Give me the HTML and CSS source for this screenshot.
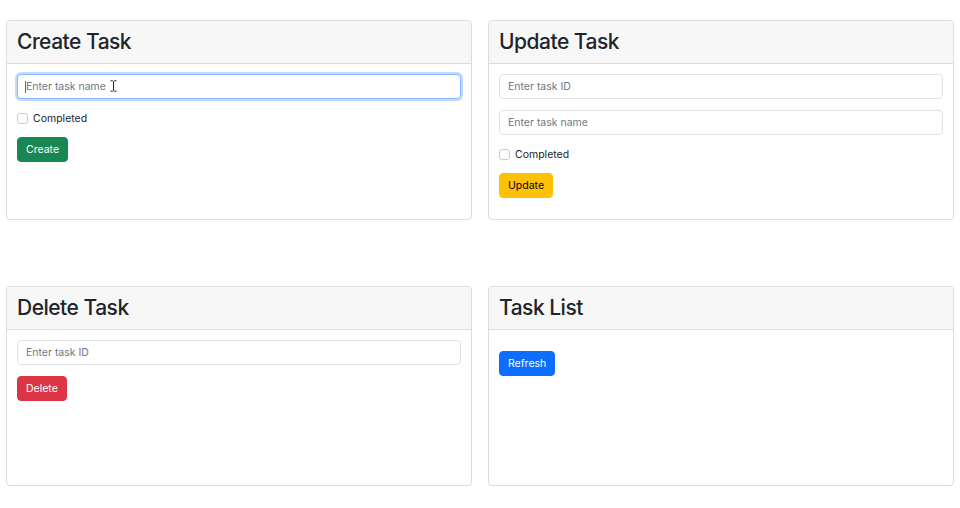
FILE: index.html
```html
<!DOCTYPE html>
<html lang="en">
<head>
<meta charset="utf-8">
<title>Tasks</title>
<link rel="stylesheet" href="styles.css">
</head>
<body>
<main class="grid">
  <section class="card">
    <header class="card-header"><h2>Create Task</h2></header>
    <div class="card-body">
      <div class="field">
        <input class="input focused" type="text" placeholder="Enter task name">
        <span class="caret"></span>
        <svg class="ibeam" width="7" height="12" viewBox="0 0 7 12"><path d="M0.5 0.8h2l1 0.8 1-0.8h2M3.5 1.6v8.8M0.5 11.2h2l1-0.8 1 0.8h2" fill="none" stroke="#222" stroke-width="1"/></svg>
      </div>
      <label class="check"><span class="box"></span>Completed</label>
      <button class="btn btn-green">Create</button>
    </div>
  </section>
  <section class="card">
    <header class="card-header"><h2>Update Task</h2></header>
    <div class="card-body">
      <div class="field"><input class="input" type="text" placeholder="Enter task ID"></div>
      <div class="field"><input class="input" type="text" placeholder="Enter task name"></div>
      <label class="check"><span class="box"></span>Completed</label>
      <button class="btn btn-yellow">Update</button>
    </div>
  </section>
  <section class="card">
    <header class="card-header"><h2>Delete Task</h2></header>
    <div class="card-body">
      <div class="field"><input class="input" type="text" placeholder="Enter task ID"></div>
      <button class="btn btn-red">Delete</button>
    </div>
  </section>
  <section class="card">
    <header class="card-header"><h2>Task List</h2></header>
    <div class="card-body">
      <ul class="list"></ul>
      <button class="btn btn-blue">Refresh</button>
    </div>
  </section>
</main>
</body>
</html>
```
FILE: styles.css
```css
* { box-sizing: border-box; }
html, body { margin: 0; padding: 0; background: #fff; }
body {
  font-family: Inter, "Helvetica Neue", "Liberation Sans", Arial, sans-serif;
  font-size: 10.5px;
  color: #212529;
}
.grid {
  display: grid;
  grid-template-columns: 466px 466px;
  column-gap: 16px;
  row-gap: 66px;
  padding: 20px 0 0 6px;
}
.card {
  height: 200px;
  border: 1px solid #dcdcdc;
  border-radius: 4px;
  background: #fff;
  overflow: hidden;
  display: flex;
  flex-direction: column;
}
.card-header {
  height: 43px;
  background: #f7f7f7;
  border-bottom: 1px solid #dcdcdc;
  padding: 0 10px;
  display: flex;
  align-items: center;
}
.card-header h2 {
  margin: 0;
  font-size: 21px;
  font-weight: 500;
  letter-spacing: -0.5px;
  color: #212529;
  line-height: 1;
  padding-bottom: 1px;
}
.card-body {
  padding: 10px 10px;
  display: flex;
  flex-direction: column;
  align-items: flex-start;
}
.field {
  width: 100%;
  margin-bottom: 11px;
  position: relative;
}
.input {
  display: block;
  width: 100%;
  height: 25px;
  padding: 0 8px;
  font-family: inherit;
  font-size: 10.5px;
  color: #212529;
  background: #fff;
  border: 1px solid #dee2e6;
  border-radius: 4px;
  outline: none;
}
.input::placeholder { color: #717780; }
.input.focused {
  border-color: #86b7fe;
  box-shadow: 0 0 0 2px rgba(13, 110, 253, 0.25);
}
.caret {
  position: absolute;
  left: 8px;
  top: 7px;
  width: 1px;
  height: 12px;
  background: #2f6df6;
}
.ibeam {
  position: absolute;
  left: 93px;
  top: 6px;
}
.check {
  display: flex;
  align-items: center;
  gap: 5px;
  height: 16px;
  margin-bottom: 11px;
  font-size: 10.5px;
  color: #212529;
}
.box {
  width: 11px;
  height: 11px;
  border: 1px solid #c9ccd0;
  border-radius: 3px;
  background: #fff;
}
.list {
  margin: 0 0 11px;
  padding: 0;
  list-style: none;
}
.btn {
  height: 25px;
  padding: 0 8px;
  font-family: inherit;
  font-size: 10.5px;
  border: 1px solid transparent;
  border-radius: 4px;
  color: #fff;
  cursor: pointer;
}
.btn-green { background: #198754; border-color: #198754; }
.btn-yellow { background: #ffc107; border-color: #ffc107; color: #000; }
.btn-red { background: #dc3545; border-color: #dc3545; }
.btn-blue { background: #0d6efd; border-color: #0d6efd; }
```
